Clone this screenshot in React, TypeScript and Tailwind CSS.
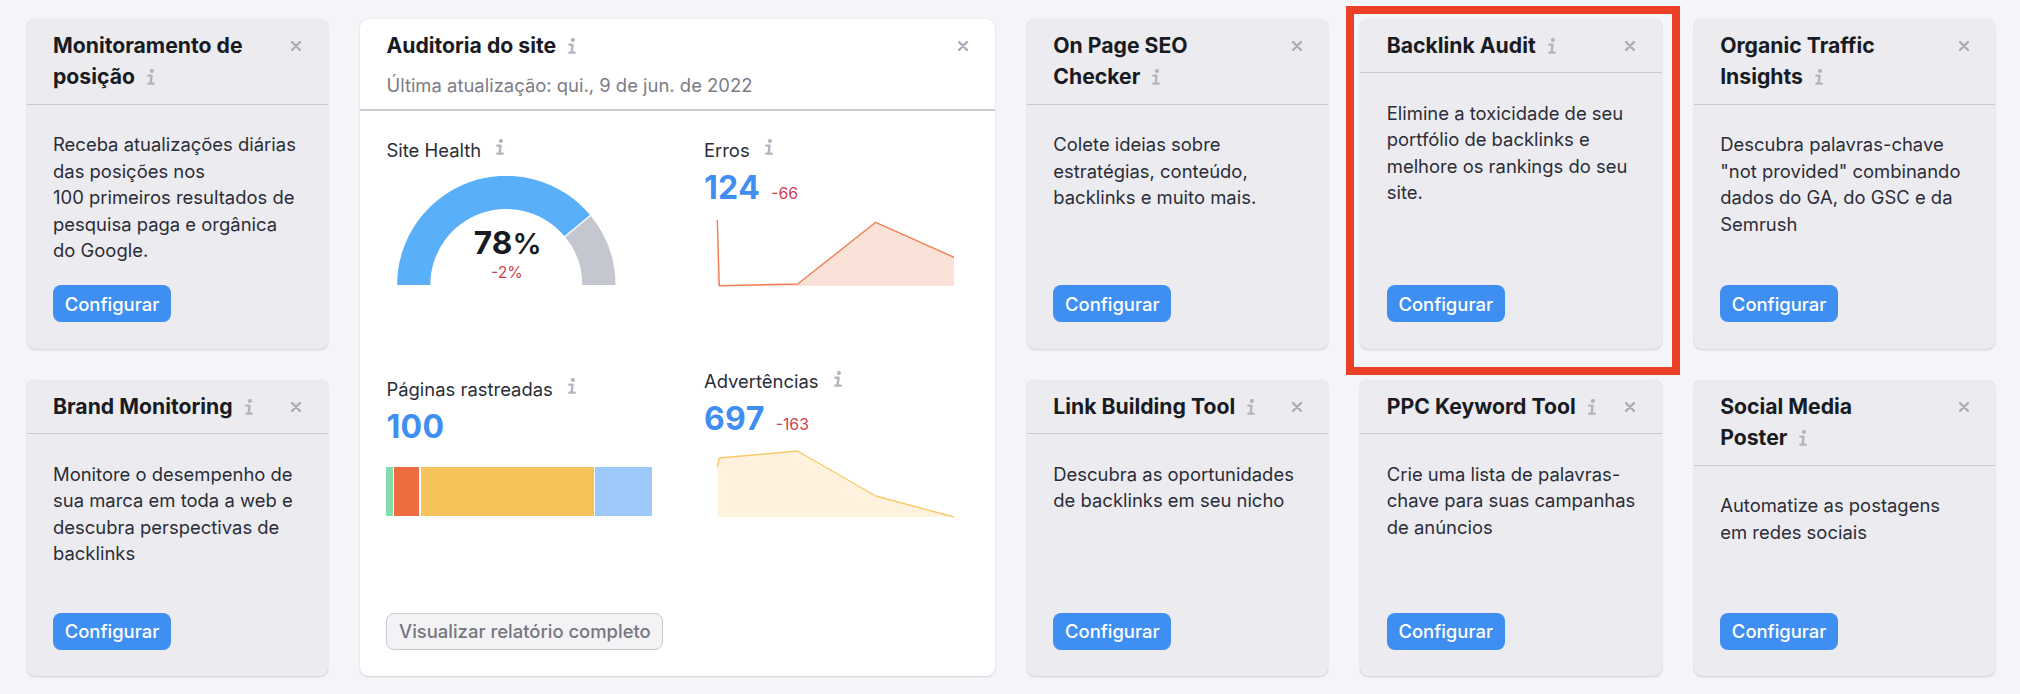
import { Fragment } from 'react'
import clsx from 'clsx'

type Tool = {
  title: string
  text: string
  highlighted?: boolean
}

const TOP_LEFT: Tool = {
  title: 'Monitoramento de\nposição',
  text: 'Receba atualizações diárias das posições nos 100\u00a0primeiros resultados de pesquisa paga e orgânica do\u00a0Google.',
}

const TOP_RIGHT: Tool[] = [
  { title: 'On Page SEO\nChecker', text: 'Colete ideias sobre estratégias, conteúdo, backlinks e muito mais.' },
  {
    title: 'Backlink Audit',
    text: 'Elimine a toxicidade de seu portfólio de backlinks e melhore os rankings do seu site.',
    highlighted: true,
  },
  {
    title: 'Organic Traffic\nInsights',
    text: 'Descubra palavras-chave "not provided" combinando dados do GA, do GSC e da Semrush',
  },
]

const BOTTOM: Tool[] = [
  {
    title: 'Brand Monitoring',
    text: 'Monitore o desempenho de sua marca em toda a web e descubra perspectivas de backlinks',
  },
  { title: 'Link Building Tool', text: 'Descubra as oportunidades de backlinks em seu nicho' },
  { title: 'PPC Keyword Tool', text: 'Crie uma lista de palavras-chave para suas campanhas de anúncios' },
  { title: 'Social Media\nPoster', text: 'Automatize as postagens em\u00a0redes sociais' },
]

function InfoIcon({ className }: { className?: string }) {
  return (
    <svg
      viewBox="0 0 8 16"
      className={clsx('inline-block h-4 w-2 shrink-0 text-[#b3b4bf]', className)}
      fill="none"
      stroke="currentColor"
      strokeWidth="2.4"
      strokeLinecap="round"
      strokeLinejoin="round"
      aria-hidden
    >
      <circle cx="4.9" cy="2" r="2.1" fill="currentColor" stroke="none" />
      <path d="M1.3 6.6h3.2L3.6 14.6M1.3 14.6h5.4" />
    </svg>
  )
}

function CloseButton() {
  return (
    <button aria-label="Fechar" className="mt-[11px] h-2.5 w-2.5 shrink-0 text-[#abacb6]">
      <svg viewBox="0 0 10 10" className="block h-2.5 w-2.5" stroke="currentColor" strokeWidth="2.4" strokeLinecap="round">
        <path d="M1 1l8 8M9 1l-8 8" />
      </svg>
    </button>
  )
}

function Title({ children }: { children: string }) {
  const lines = children.split('\n')
  return (
    <h2 className="text-[21.2px] leading-[31.7px] font-bold text-[#191b23]">
      {lines.map((line, i) => (
        <Fragment key={line}>
          {i > 0 && <br />}
          {line}
        </Fragment>
      ))}
      <InfoIcon className="ml-3 align-[-1px]" />
    </h2>
  )
}

function ToolCard({ tool }: { tool: Tool }) {
  return (
    <section className="relative flex flex-col rounded-lg bg-[#ebebf0] shadow-[0_0_1px_rgba(25,27,35,0.16),0_1px_2px_rgba(25,27,35,0.14)]">
      <header className="flex items-start justify-between border-b border-[#c7c9d0] px-[26.5px] py-[11px]">
        <Title>{tool.title}</Title>
        <CloseButton />
      </header>
      <div className="flex flex-1 flex-col items-start justify-between py-[26.5px] pr-[22px] pl-[26.5px]">
        <p className="text-[18.45px] leading-[26.4px] text-[#2b2e38]">{tool.text}</p>
        <button className="h-[36.7px] w-[118px] rounded-lg bg-[#3f8ff2] text-[18.45px] leading-[36px] font-medium text-white">
          Configurar
        </button>
      </div>
      {tool.highlighted && (
        <div className="pointer-events-none absolute -top-[13px] -right-[18px] -bottom-[26px] -left-[14px] border-8 border-[#ea4026]" />
      )}
    </section>
  )
}

function MetricLabel({ children }: { children: string }) {
  return (
    <div className="flex items-start text-[18.45px] leading-[26.4px] text-[#2b2e38]">
      {children}
      <InfoIcon className="mt-[2.5px] ml-[15px]" />
    </div>
  )
}

function Metric({ value, delta }: { value: string; delta?: string }) {
  return (
    <div className="mt-[9px] flex h-8 items-baseline text-[32px] leading-8 font-bold tracking-[0.4px] text-[#3f8ff2]">
      {value}
      {delta && (
        <span className="ml-[11px] text-[15.8px] leading-4 font-normal tracking-normal text-[#cf3f4f]">{delta}</span>
      )}
    </div>
  )
}

function Gauge() {
  const cx = 109.3
  const cy = 109
  const point = (r: number, deg: number) => {
    const a = (deg * Math.PI) / 180
    return `${cx - r * Math.cos(a)} ${cy - r * Math.sin(a)}`
  }
  const arc = (from: number, to: number) =>
    `M${point(109.2, from)}A109.2 109.2 0 0 1 ${point(109.2, to)}L${point(76, to)}A76 76 0 0 0 ${point(76, from)}Z`
  const split = 180 * 0.78

  return (
    <div className="relative mt-[13px] ml-[11px] h-[108.5px] w-[219px]">
      <svg viewBox="0 0 219 108.5" className="block h-full w-full">
        <path d={arc(0, split)} fill="#5aaff9" />
        <path d={arc(split, 180)} fill="#c4c7cf" />
        <path d={`M${point(75, split)}L${point(111, split)}`} stroke="#fff" strokeWidth="1.4" />
      </svg>
      <div className="absolute inset-x-0 top-[51px] flex flex-col items-center">
        <span className="text-[31.7px] leading-8 font-bold text-[#191b23]">
          78<span className="text-[29px] font-semibold tracking-[-1.5px]">%</span>
        </span>
        <span className="mt-[3px] text-[15.8px] leading-5 text-[#cf3f4f]">-2%</span>
      </div>
    </div>
  )
}

function AreaChart({ points, stroke, fill }: { points: string; stroke: string; fill: string }) {
  return (
    <svg viewBox="0 0 238 68" className="mt-[14.5px] ml-3 block h-[68px] w-[238px]">
      <polygon points={`1.3,67 ${points} 238,67`} fill={fill} />
      <polyline points={points} fill="none" stroke={stroke} strokeWidth="1.4" strokeLinejoin="round" />
    </svg>
  )
}

function SiteAuditCard() {
  return (
    <section className="col-span-2 row-span-2 flex flex-col rounded-lg bg-white shadow-[0_0_1px_rgba(25,27,35,0.16),0_1px_2px_rgba(25,27,35,0.14)]">
      <header className="flex items-start justify-between border-b-2 border-[#cbcdd4] px-[26.5px] pt-[11px] pb-[10.5px]">
        <div>
          <Title>Auditoria do site</Title>
          <p className="mt-[11px] text-[18.45px] leading-[26.4px] text-[#7b7d88]">
            Última atualização: qui., 9 de jun. de 2022
          </p>
        </div>
        <CloseButton />
      </header>
      <div className="flex flex-1 flex-col items-start justify-between px-[26.5px] pt-[25.5px] pb-[26.5px]">
        <div className="grid grid-cols-[317.5px_1fr]">
          <div>
            <MetricLabel>Site Health</MetricLabel>
            <Gauge />
            <div className="mt-[91px]">
              <MetricLabel>Páginas rastreadas</MetricLabel>
              <Metric value="100" />
              <div className="mt-6 flex h-[49.5px] w-[265.5px] gap-[1.5px]">
                <div className="w-[6.5px] bg-[#84dbac]" />
                <div className="w-[25px] bg-[#ed6d40]" />
                <div className="flex-1 bg-[#f4c45b]" />
                <div className="w-[56.7px] bg-[#9dc9fb]" />
              </div>
            </div>
          </div>
          <div>
            <MetricLabel>Erros</MetricLabel>
            <Metric value="124" delta="-66" />
            <AreaChart
              points="1.3,1 3.3,66.7 81.7,65 159.7,3.3 238,38.3"
              stroke="#f07f52"
              fill="#fbe2d9"
            />
            <div className="mt-[81.5px]">
              <MetricLabel>Advertências</MetricLabel>
              <Metric value="697" delta="-163" />
              <AreaChart
                points="1.3,17 3.3,8 81.5,1 159.7,46 238,67"
                stroke="#f8ca66"
                fill="#fef2df"
              />
            </div>
          </div>
        </div>
        <button className="h-[36.7px] w-[277px] rounded-lg border border-[#c8c9d1] bg-[#f3f3f5] text-[18.45px] leading-[34px] font-medium text-[#75777f]">
          Visualizar relatório completo
        </button>
      </div>
    </section>
  )
}

export default function App() {
  return (
    <main className="h-[694px] w-[2020px] overflow-hidden bg-[#f3f5f9] pt-[18.5px] pr-[24.9px] pl-[26.5px] font-['Inter',sans-serif] [font-optical-sizing:none]">
      <div className="grid grid-cols-6 grid-rows-[330px_296.5px] gap-x-8 gap-y-[31px]">
        <ToolCard tool={TOP_LEFT} />
        <SiteAuditCard />
        {TOP_RIGHT.map(tool => <ToolCard key={tool.title} tool={tool} />)}
        {BOTTOM.map(tool => <ToolCard key={tool.title} tool={tool} />)}
      </div>
    </main>
  )
}
